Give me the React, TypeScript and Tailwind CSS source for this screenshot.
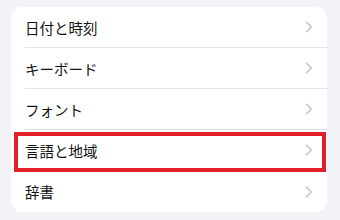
import React from 'react';

const items = ['日付と時刻', 'キーボード', 'フォント', '言語と地域', '辞書'];

const Chevron = () => (
    <svg width="8" height="12" viewBox="0 0 8 12" className="shrink-0">
        <path d="M1.5 1.2 L6.3 6 L1.5 10.8" fill="none" stroke="#c4c4c7" strokeWidth="1.6" strokeLinecap="round" strokeLinejoin="round" />
    </svg>
);

const App: React.FC = () => {
    return (
        <div
            className="w-[340px] h-[220px] bg-[#f2f2f7] pt-[7px] px-[11px]"
            style={{ fontFamily: '"Noto Sans CJK JP", "Noto Sans", sans-serif' }}
        >
            <div className="relative bg-white rounded-[11px] w-[316px]">
                {items.map((label, i) => (
                    <div key={label} className="relative pl-[14px]">
                        <div
                            className={`h-[41px] flex items-center justify-between pr-[14px] ${i < items.length - 1 ? 'border-b border-[#e3e3e6]' : ''}`}
                        >
                            <span className="text-[14.5px] text-[#111] leading-none pt-[2px]">{label}</span>
                            <Chevron />
                        </div>
                        {/* highlight */}
                        {label === '言語と地域' && (
                            <div className="absolute left-[3px] right-[1px] top-[2px] h-[40px] border-4 border-[#e2202b]" />
                        )}
                    </div>
                ))}
            </div>
        </div>
    );
};

export default App;
